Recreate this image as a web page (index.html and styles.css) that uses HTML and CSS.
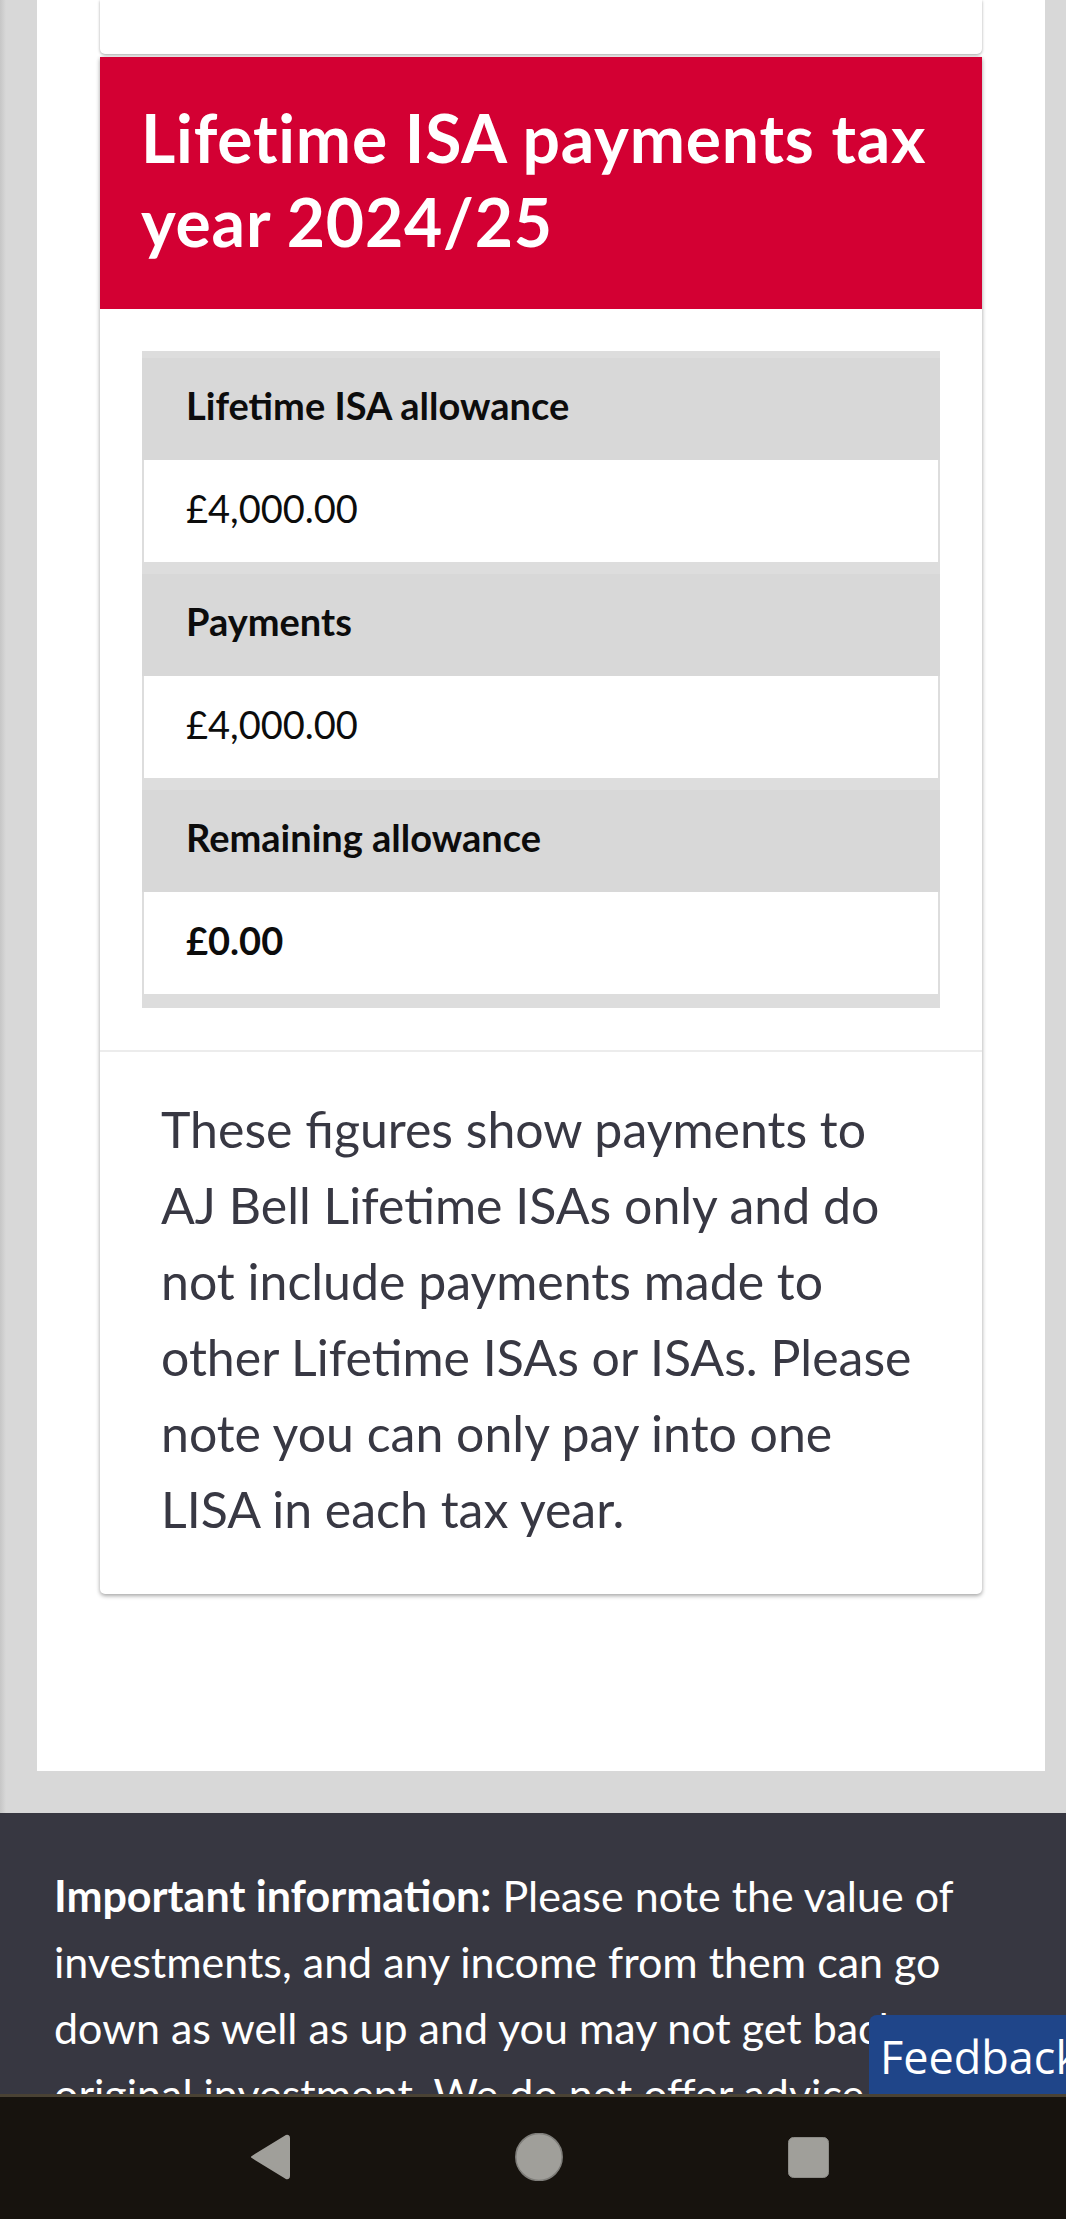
FILE: index.html
```html
<!DOCTYPE html>
<html lang="en">
<head>
<meta charset="utf-8">
<title>Lifetime ISA payments</title>
<link rel="stylesheet" href="styles.css">
</head>
<body>
<div class="viewport">
  <main class="page">
    <div class="prev-card"></div>

    <section class="card">
      <h2 class="card-title">Lifetime ISA payments tax year 2024/25</h2>
      <div class="card-body">
        <dl class="allowance">
          <div class="group">
            <dt class="label">Lifetime ISA allowance</dt>
            <dd class="value">£4,000.00</dd>
          </div>
          <div class="group">
            <dt class="label">Payments</dt>
            <dd class="value">£4,000.00</dd>
          </div>
          <div class="group">
            <dt class="label">Remaining allowance</dt>
            <dd class="value value-strong">£0.00</dd>
          </div>
        </dl>
      </div>
      <div class="card-note">
        <p>These figures show payments to<br>AJ Bell Lifetime ISAs only and do<br>not include payments made to<br>other Lifetime ISAs or ISAs. Please<br>note you can only pay into one<br>LISA in each tax year.</p>
      </div>
    </section>
  </main>

  <footer class="site-footer">
    <p><strong>Important information:</strong> Please note the value of<br>investments, and any income from them can go<br>down as well as up and you may not get back your<br>original investment. We do not offer advice, so you should ensure you understand the risks before investing.</p>
  </footer>

  <a class="feedback" href="#">Feedback</a>

  <nav class="android-nav" aria-label="System navigation">
    <svg class="nav-back" width="40" height="46" viewBox="0 0 40 46" aria-hidden="true">
      <path d="M2 23 L36 2 Q39 1 39 4 L39 42 Q39 45 36 44 Z" fill="#a09f9a" stroke="#a09f9a" stroke-width="2" stroke-linejoin="round"/>
    </svg>
    <svg class="nav-home" width="48" height="48" viewBox="0 0 48 48" aria-hidden="true">
      <ellipse cx="24" cy="24" rx="23.2" ry="23.5" fill="#a09f9a" stroke="#7f7e7a" stroke-width="1.5"/>
    </svg>
    <svg class="nav-recents" width="41" height="41" viewBox="0 0 41 41" aria-hidden="true">
      <rect x="0.5" y="0.5" width="40" height="40" rx="5" fill="#a09f9a" stroke="#8c8b86" stroke-width="1"/>
    </svg>
  </nav>
</div>
</body>
</html>
```

FILE: styles.css
```css
* { box-sizing: border-box; }

html, body {
  margin: 0;
  padding: 0;
}

body {
  background: linear-gradient(to right, #c6c6c6 0, #d8d8d8 6px) #d8d8d8;
  font-family: "Lato", "Liberation Sans", sans-serif;
  color: #000;
}

.viewport {
  height: 2219px;
  overflow: hidden;
  position: relative;
}

.page {
  margin: 0 21px 0 37px;
  background: #fff;
  padding: 0 63px 177px;
}

.prev-card {
  height: 54px;
  background: #fff;
  border-radius: 0 0 5px 5px;
  box-shadow: 0 1px 3px rgba(0, 0, 0, 0.35);
}

.card {
  margin-top: 3px;
  background: #fff;
  border-radius: 0 0 5px 5px;
  box-shadow: 0 2px 4px rgba(0, 0, 0, 0.32), 0 0 4px rgba(0, 0, 0, 0.08);
}

.card-title {
  margin: 0;
  background: #d30033;
  color: #fff;
  font-size: 66px;
  font-weight: 700;
  letter-spacing: 0.8px;
  line-height: 84px;
  padding: 39px 30px 45px 41px;
}

.card-body {
  padding: 42px;
  border-bottom: 2px solid #ececec;
}

.allowance {
  margin: 0;
  background: #dddddd;
  padding: 7px 0 14px;
  display: flex;
  flex-direction: column;
  gap: 12px;
}

.group {
  display: flex;
  flex-direction: column;
}

.label {
  background: #d8d8d8;
  height: 102px;
  display: flex;
  align-items: center;
  padding: 0 0 8px 44px;
  font-size: 38px;
  font-weight: 700;
  color: #0c0c0c;
}

.value {
  margin: 0 2px;
  background: #fff;
  height: 102px;
  display: flex;
  align-items: center;
  padding: 0 0 7px 42px;
  font-size: 38px;
  color: #0c0c0c;
}

.value-strong { font-weight: 700; }

.card-note {
  padding: 39px 30px 47px 61px;
}

.card-note p {
  margin: 0;
  font-size: 50px;
  line-height: 76px;
  color: #383843;
  white-space: nowrap;
}

.site-footer {
  margin-top: 42px;
  background: #373741;
  color: #fff;
  padding: 50px 30px 40px 54px;
  height: 500px;
}

.site-footer p {
  margin: 0;
  font-size: 43px;
  line-height: 66px;
  white-space: nowrap;
}

.site-footer strong { font-weight: 700; }

.feedback {
  position: absolute;
  left: 869px;
  top: 2015px;
  width: 220px;
  height: 120px;
  background: #1f4589;
  border-radius: 8px 0 0 0;
  color: #fff;
  text-decoration: none;
  font-family: "Open Sans", "Noto Sans", sans-serif;
  font-size: 45px;
  line-height: 1;
  padding: 19px 0 0 11px;
  white-space: nowrap;
}

.android-nav {
  position: absolute;
  left: 0;
  right: 0;
  bottom: 0;
  height: 125px;
  background: #17130e;
  border-top: 3px solid #4a4234;
  display: flex;
  align-items: center;
  justify-content: flex-start;
  gap: 225px;
  padding: 0 0 2px 250px;
}

.android-nav svg { display: block; }
```
